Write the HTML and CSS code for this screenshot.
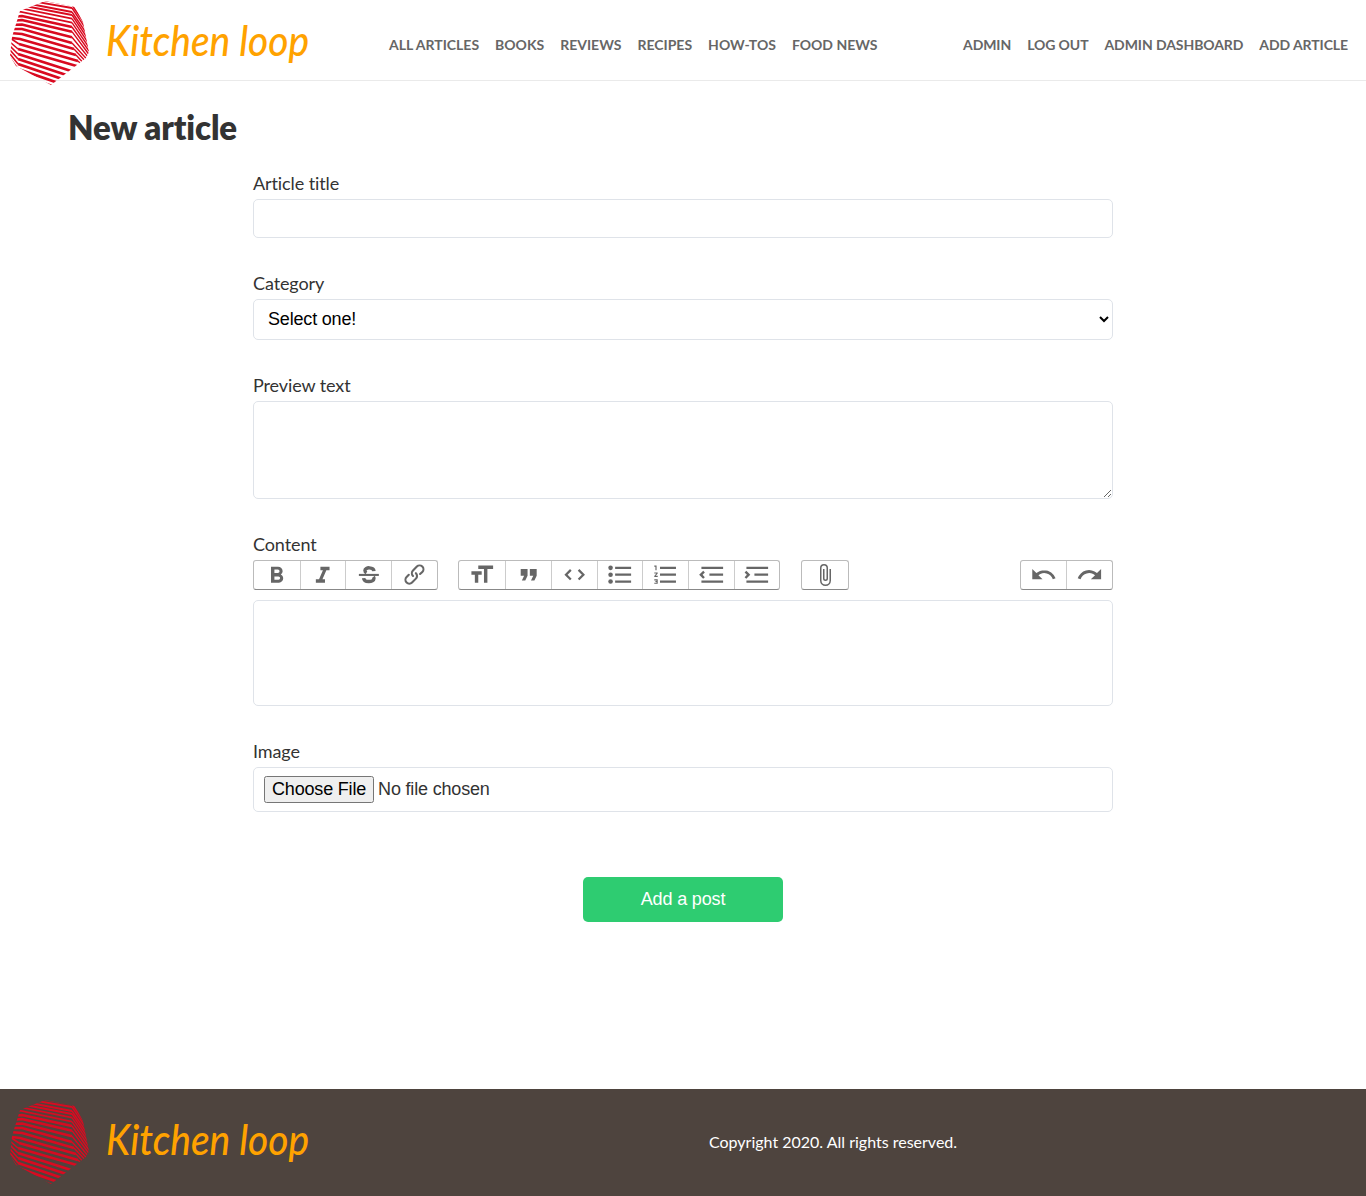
FILE: index.html
```html
<!DOCTYPE html>
<html lang="en">
<head>
<meta charset="utf-8">
<title>Kitchen loop</title>
<link rel="stylesheet" href="styles.css">
</head>
<body>
<svg class="defs" aria-hidden="true">
  <symbol id="gem-mark" viewBox="0 0 100 90">
    <clipPath id="gem"><path d="M20 11 45 1 75 7 83 22 89 52 86 58 51 85 16 66 10 56 12 37Z"/></clipPath>
    <g clip-path="url(#gem)" fill="none" stroke="#d90a20">
      <path stroke-width="1.8" d="M10-3 20-4 72 5M10 0 20-1 72 8M10 3 20 2 72 12M10 7 20 5 72 15M10 11 20 8.2 72 18.7M10 14 20 11.7 72 22.7"/>
      <path stroke-width="2.500" d="M10 17 22 16 72 27M10 21 22 20 72 31.7M10 25 22 24.500 72 37.200M10 29 22 29 72 43M10 33 22 34 74 49M12 38 20 39 76 55M19 44 78 61M18 49 80 67"/>
      <path stroke-width="2.800" d="M18 54 82 74.500M18 59 80 79.500M18 64 80 85M18 69 80 90.500M18 74 80 96"/>
      <path stroke-width="1.400" d="M72 5 89 30M72 8 89 33.500M72 12 89 37M72 15 89 40.500M72 18.700 89 44M72 22.700 89 47.500M72 27 89 51M72 31.700 89 54.500M72 37.200 89 58M72 43 89 61.500M74 49 89 65M76 55 89 69M78 61 89 72M80 67 89 75"/>
      <path stroke-width="1.600" d="M19 44 10 38M18 49 10 42M18 54 10 46M18 59 10 50M18 64 10 54M18 69 10 58"/>
    </g>
  </symbol>
</svg>

<header class="site-header">
  <a class="brand"><svg viewBox="0 0 320 90"><use href="#gem-mark" width="100" height="90"/><text class="brand-name" x="106" y="56" textLength="203" lengthAdjust="spacingAndGlyphs">Kitchen loop</text></svg></a>
  <nav class="nav nav-main">
    <a>All articles</a><a>Books</a><a>Reviews</a><a>Recipes</a><a>How-tos</a><a>Food news</a>
  </nav>
  <nav class="nav nav-user">
    <a>Admin</a><a>Log out</a><a>Admin dashboard</a><a>Add article</a>
  </nav>
</header>

<main class="page">
  <h1>New article</h1>
  <form class="form">
    <div class="field">
      <label for="title">Article title</label>
      <input class="control title-input" id="title" type="text">
    </div>
    <div class="field">
      <label for="category">Category</label>
      <select class="control select" id="category"><option>Select one!</option></select>
    </div>
    <div class="field">
      <label for="preview">Preview text</label>
      <textarea class="control preview" id="preview"></textarea>
    </div>
    <div class="field">
      <label>Content</label>
      <div class="toolbar">
        <div class="group">
          <button type="button"><svg viewBox="0 0 24 24"><path d="M15.6 11.8c1-.7 1.6-1.8 1.6-2.8a4 4 0 0 0-4-4H7v14h7c2.1 0 3.7-1.7 3.7-3.8 0-1.5-.8-2.8-2.1-3.4zM10 7.5h3a1.5 1.5 0 1 1 0 3h-3v-3zm3.5 9H10v-3h3.5a1.5 1.5 0 1 1 0 3z"/></svg></button>
          <button type="button"><svg viewBox="0 0 24 24"><path d="M10 5v3h2.2l-3.4 8H6v3h8v-3h-2.2l3.4-8H18V5z"/></svg></button>
          <button type="button"><svg viewBox="0 0 24 24"><path d="M3.400 11.300h17.500v1.800H3.400z"/><path class="line" stroke-width="3" d="M16.600 8.800C16.400 5.300 8.700 5 8.700 8.300c0 1 .6 1.600 1.400 2M7.600 15c.2 4.200 9 3.800 9 .3 0-.6-.2-1-.5-1.400"/></svg></button>
          <button type="button"><svg viewBox="0 0 24 24"><path d="M9.880 13.700a4.300 4.300 0 0 1 0-6.070l3.370-3.370a4.260 4.260 0 0 1 6.070 0 4.300 4.300 0 0 1 0 6.060l-1.960 1.720a.91.91 0 1 1-1.300-1.300l1.970-1.710a2.460 2.460 0 0 0-3.480-3.480l-3.380 3.370a2.460 2.460 0 0 0 0 3.480.91.91 0 1 1-1.300 1.300z"/><path d="M4.250 19.460a4.300 4.300 0 0 1 0-6.070l1.930-1.900a.91.91 0 1 1 1.300 1.300l-1.930 1.900a2.460 2.460 0 0 0 3.480 3.480l3.370-3.380c.96-.96.96-2.520 0-3.480a.91.91 0 1 1 1.300-1.300 4.300 4.300 0 0 1 0 6.070l-3.380 3.380a4.260 4.260 0 0 1-6.070 0z"/></svg></button>
        </div>
        <div class="group text-blocks">
          <button type="button"><svg viewBox="0 0 24 24"><path d="M9 4v3h5v12h3V7h5V4H9zm-6 8h3v7h3v-7h3V9H3v3z"/></svg></button>
          <button type="button"><svg viewBox="0 0 24 24"><path d="M6 17h3l2-4V7H5v6h3zm8 0h3l2-4V7h-6v6h3z"/></svg></button>
          <button type="button"><svg viewBox="0 0 24 24"><path class="line" stroke-width="2" d="m8.600 7.800-4.200 4.200 4.200 4.200m6.800-8.400 4.200 4.200-4.200 4.200"/></svg></button>
          <button type="button"><svg viewBox="0 0 24 24"><path d="M8 5v2h14V5zm0 6v2h14v-2zm0 6v2h14v-2z"/><circle cx="4" cy="6" r="2"/><circle cx="4" cy="12" r="2"/><circle cx="4" cy="18" r="2"/></svg></button>
          <button type="button"><svg viewBox="0 0 24 24"><path d="M2 17h2v.5H3v1h1v.5H2v1h3v-4H2v1zm1-9h1V4H2v1h1v3zm-1 3h1.800L2 13.100v.9h3v-1H3.200L5 10.900V10H2v1zm5-6v2h14V5H7zm0 14h14v-2H7v2zm0-6h14v-2H7v2z"/></svg></button>
          <button type="button"><svg viewBox="0 0 24 24"><path d="M3 19h19v-2H3v2zm7-6h12v-2H10v2zm-8.300-.3 2.800 2.900L6 14.200 4 12l2-2-1.400-1.500L1 12l.7.700zM3 5v2h19V5H3z"/></svg></button>
          <button type="button"><svg viewBox="0 0 24 24"><path d="M3 19h19v-2H3v2zm7-6h12v-2H10v2zm-4.300-.3L2.900 15.600 1.400 14.200l2-2.200-2-2 1.500-1.500L6.400 12l-.7.700zM3 5v2h19V5H3z"/></svg></button>
        </div>
        <div class="group attach">
          <button type="button"><svg viewBox="0 0 24 24"><path d="M16.500 6v11.500a4 4 0 1 1-8 0V5a2.500 2.500 0 0 1 5 0v10.500a1 1 0 1 1-2 0V6H10v9.500a2.500 2.500 0 0 0 5 0V5a4 4 0 1 0-8 0v12.500a5.500 5.500 0 0 0 11 0V6h-1.500z"/></svg></button>
        </div>
        <div class="group history">
          <button type="button"><svg viewBox="0 0 24 24"><path d="M12.500 8c-2.600 0-5 1-6.900 2.600L2 7v9h9l-3.600-3.600A8 8 0 0 1 20 16l2.400-.8a10.500 10.500 0 0 0-10-7.200z"/></svg></button>
          <button type="button"><svg viewBox="0 0 24 24"><path d="M18.400 10.600a10.500 10.500 0 0 0-16.900 4.600L4 16a8 8 0 0 1 12.700-3.600L13 16h9V7l-3.600 3.600z"/></svg></button>
        </div>
      </div>
      <div class="control editor" contenteditable="true"></div>
    </div>
    <div class="field">
      <label for="image">Image</label>
      <input class="control file" id="image" type="file">
    </div>
    <button class="submit" type="button">Add a post</button>
  </form>
</main>

<footer class="site-footer">
  <a class="brand"><svg viewBox="0 0 320 90"><use href="#gem-mark" width="100" height="90"/><text class="brand-name" x="106" y="56" textLength="203" lengthAdjust="spacingAndGlyphs">Kitchen loop</text></svg></a>
  <p>Copyright 2020. All rights reserved.</p>
</footer>
</body>
</html>
```
FILE: styles.css
```css
* { box-sizing: border-box; }
body {
  margin: 0;
  min-height: 1196px;
  display: flex;
  flex-direction: column;
  font: 18px/27px Lato, sans-serif;
  font-variant-ligatures: none;
  color: #333;
  background: #fff;
}
.defs { position: absolute; width: 0; height: 0; }
.site-header {
  height: 81px;
  display: flex;
  align-items: center;
  border-bottom: 1px solid #eaeaea;
}
.brand { width: 320px; height: 90px; align-self: flex-start; flex: none; }
.brand svg { display: block; width: 320px; height: 90px; overflow: visible; }
.brand-name {
  font: italic 500 43px/50px Lato, sans-serif;
  fill: #ffa200;
}
.nav {
  display: flex;
  gap: 16px;
  padding-top: 8px;
  font-size: 14px;
  font-weight: 700;
  text-transform: uppercase;
  color: #666;
  white-space: nowrap;
}
.nav-main { margin-left: 69px; }
.nav-user { margin-left: auto; margin-right: 18px; letter-spacing: -.08px; }
.page { width: 1230px; margin: 0 auto; flex: 1; }
h1 { margin: 23px 0 0; font-size: 33px; line-height: 46px; font-weight: 800; letter-spacing: -.1px; }
.form { width: 860px; margin: 20px auto 0; display: flex; flex-direction: column; }
.field { margin-bottom: 32px; }
.field label { display: block; height: 29px; line-height: 27px; letter-spacing: -.1px; }
.control {
  display: block;
  width: 100%;
  border: 1px solid #dfe3e9;
  border-radius: 5px;
  background: #fff;
  font: 18px "Liberation Sans", Arial, sans-serif;
  letter-spacing: -.18px;
}
.title-input { height: 39px; }
.select { height: 41px; padding: 0 10px 2px; color: #000; }
.preview { height: 98px; resize: vertical; }
.toolbar { display: flex; margin-bottom: 10px; }
.group {
  display: flex;
  height: 30px;
  margin-right: 20px;
  border: 1px solid #bbb;
  border-bottom-color: #888;
  border-radius: 3px;
}
.group button {
  width: 45.700px;
  padding: 0;
  border: 0;
  border-left: 1px solid #ccc;
  background: none;
  display: flex;
  align-items: center;
  justify-content: center;
}
.group button:first-child { border-left: 0; }
.group svg { width: 27.400px; height: 27.400px; flex: none; fill: #666; }
.group .line { fill: none; stroke: #666; }
.group.text-blocks { margin-right: 21px; }
.group.text-blocks button:first-child { width: 46.500px; }
.group.attach button { width: 46px; }
.group.attach svg { width: 24px; height: 24px; }
.group.history { margin: 0 0 0 auto; }
.editor { height: 106px; }
.file { height: 45px; padding: 8px 10px; color: #333; }
.file::file-selector-button { letter-spacing: -.18px; }
.submit {
  width: 200px;
  height: 45px;
  margin: 33px auto 0;
  border: 0;
  border-radius: 5px;
  background: #2ecc71;
  color: #fff;
  font: 18px "Liberation Sans", Arial, sans-serif;
  letter-spacing: -.15px;
}
.site-footer {
  height: 107px;
  display: flex;
  align-items: center;
  background: #4e443e;
  color: #fff;
  font-size: 16px;
}
.site-footer .brand { margin-top: 10px; }
.site-footer p { margin: -2px 0 0 389px; }
```
